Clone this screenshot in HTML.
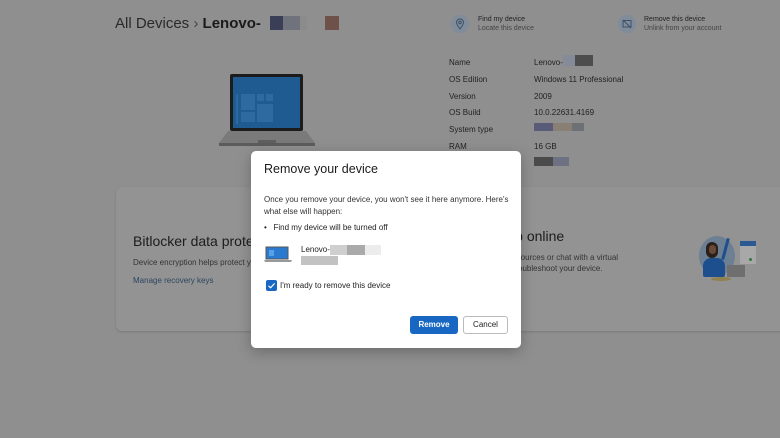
<!DOCTYPE html>
<html><head><meta charset="utf-8"><style>
*{margin:0;padding:0;box-sizing:border-box}
body{width:780px;height:438px;overflow:hidden;background:#8f8f8f;font-family:"Liberation Sans",sans-serif;position:relative;color:#1e1e1e}
.a{position:absolute}
.s{font-size:8px;color:#222;white-space:nowrap}
.t{font-size:8px;color:#333;white-space:nowrap}
</style></head><body>
<div class="a" style="left:115px;top:15px;font-size:15px;color:#2a2a2a;white-space:nowrap">All Devices <span style="color:#444">&#8250;</span> <span style="font-weight:bold;color:#1a1a1a">Lenovo-</span></div>
<div class="a" style="left:270px;top:16px;width:13px;height:14px;background:#3a3f57"></div>
<div class="a" style="left:283px;top:16px;width:17px;height:14px;background:#70737c"></div>
<div class="a" style="left:300px;top:16px;width:7px;height:14px;background:#8b8b8b"></div>
<div class="a" style="left:325px;top:16px;width:14px;height:14px;background:#6e5249"></div>

<div class="a" style="left:451px;top:15px;width:18px;height:18px;border-radius:50%;background:#7f8c9a"></div>
<svg class="a" style="left:455px;top:18px" width="10" height="12" viewBox="0 0 10 12"><path d="M5 11C2 7 1.5 5.5 1.5 4.5A3.5 3.5 0 0 1 8.5 4.5C8.5 5.5 8 7 5 11Z" fill="none" stroke="#3d4f66" stroke-width="1"/><circle cx="5" cy="4.5" r="1.2" fill="none" stroke="#3d4f66"/></svg>
<div class="a s" style="left:478px;top:16px;font-size:7px">Find my device</div>
<div class="a t" style="left:478px;top:25px;font-size:7px;color:#444">Locate this device</div>
<div class="a" style="left:618px;top:15px;width:18px;height:18px;border-radius:50%;background:#7f8c9a"></div>
<svg class="a" style="left:622px;top:19px" width="10" height="10" viewBox="0 0 10 10"><rect x="1" y="1.5" width="8" height="6.5" fill="none" stroke="#3d4f66"/><path d="M1 1L9 9" stroke="#3d4f66"/></svg>
<div class="a s" style="left:644px;top:16px;font-size:7px">Remove this device</div>
<div class="a t" style="left:644px;top:25px;font-size:7px;color:#444">Unlink from your account</div>

<!-- laptop -->
<div class="a" style="left:230px;top:74px;width:73px;height:57px;background:#1c1c1c;border-radius:2px"></div>
<div class="a" style="left:233px;top:77px;width:67px;height:51px;background:#1f5a90"></div>
<div class="a" style="left:236px;top:94px;width:2px;height:30px;background:#2e6aa0"></div>
<div class="a" style="left:241px;top:94px;width:14px;height:16px;background:#2e6aa0"></div>
<div class="a" style="left:241px;top:112px;width:14px;height:10px;background:#2e6aa0"></div>
<div class="a" style="left:257px;top:94px;width:7px;height:7px;background:#2e6aa0"></div>
<div class="a" style="left:266px;top:94px;width:7px;height:7px;background:#2e6aa0"></div>
<div class="a" style="left:257px;top:104px;width:16px;height:18px;background:#2e6aa0"></div>
<svg class="a" style="left:218px;top:131px" width="98" height="17"><path d="M10 0H88L97 12H1Z" fill="#7a7a7a"/><rect x="1" y="12" width="96" height="3" fill="#5c5c5c"/><rect x="40" y="9" width="18" height="3" fill="#5f5f5f"/></svg>

<div class="a" style="left:449px;top:55px;line-height:16.8px;font-size:8px;color:#222">Name<br>OS Edition<br>Version<br>OS Build<br>System type<br>RAM</div>
<div class="a" style="left:534px;top:55px;line-height:16.8px;font-size:8px;color:#222">Lenovo-<br>Windows 11 Professional<br>2009<br>10.0.22631.4169<br><br>16 GB</div>
<div class="a" style="left:563px;top:55px;width:12px;height:11px;background:#858b98"></div>
<div class="a" style="left:575px;top:55px;width:18px;height:11px;background:#4d4d4d"></div>
<div class="a" style="left:534px;top:123px;width:19px;height:8px;background:#595b78"></div>
<div class="a" style="left:553px;top:123px;width:19px;height:8px;background:#8a7f74"></div>
<div class="a" style="left:572px;top:123px;width:12px;height:8px;background:#6d7175"></div>
<div class="a" style="left:534px;top:157px;width:19px;height:9px;background:#4b4b4b"></div>
<div class="a" style="left:553px;top:157px;width:16px;height:9px;background:#6d7182"></div>

<!-- card -->
<div class="a" style="left:116px;top:187px;width:680px;height:144px;background:#939393;border-radius:6px;box-shadow:0 1px 2px rgba(0,0,0,.15)"></div>
<div class="a" style="left:133px;top:233px;font-size:14px;color:#1c1c1c;white-space:nowrap">Bitlocker data protection</div>
<div class="a t" style="left:133px;top:258px">Device encryption helps protect your data</div>
<div class="a t" style="left:133px;top:276px;color:#2c4660">Manage recovery keys</div>
<div class="a" style="left:470px;top:228px;font-size:14px;color:#1c1c1c;white-space:nowrap">Get help online</div>
<div class="a t" style="left:482px;top:253px">Search resources or chat with a virtual</div>
<div class="a t" style="left:482px;top:264px">agent to troubleshoot your device.</div>
<!-- illustration -->
<div class="a" style="left:699px;top:236px;width:36px;height:40px;border-radius:50%;background:#6d7f92"></div>
<div class="a" style="left:711px;top:277px;width:20px;height:4px;border-radius:50%;background:#8f8150"></div>
<div class="a" style="left:740px;top:244px;width:16px;height:20px;background:#a8a8a8"></div>
<div class="a" style="left:740px;top:241px;width:16px;height:5px;background:#2b5a92"></div>
<div class="a" style="left:749px;top:258px;width:3px;height:3px;border-radius:50%;background:#2f7b3b"></div>
<div class="a" style="left:706px;top:242px;width:12px;height:16px;border-radius:6px;background:#2a1f1a"></div>
<div class="a" style="left:709px;top:245px;width:7px;height:9px;border-radius:4px;background:#6a4a36"></div>
<div class="a" style="left:703px;top:258px;width:22px;height:19px;border-radius:8px 8px 2px 2px;background:#1d4f8e"></div>
<div class="a" style="left:724px;top:238px;width:3px;height:22px;background:#1d4f8e;transform:rotate(15deg)"></div>
<div class="a" style="left:727px;top:265px;width:18px;height:12px;background:#6f6f6f"></div>

<!-- dialog -->
<div class="a" style="left:251px;top:151px;width:270px;height:197px;background:#fff;border-radius:5px;box-shadow:0 4px 14px rgba(0,0,0,.25)"></div>
<div class="a" style="left:264px;top:162px;font-size:12.5px;color:#1b1b1b;white-space:nowrap">Remove your device</div>
<div class="a" style="left:264px;top:194px;font-size:8px;color:#333;line-height:11.5px;width:250px">Once you remove your device, you won't see it here anymore. Here's what else will happen:</div>
<div class="a" style="left:264px;top:223px;font-size:8px;color:#222;white-space:nowrap">&#8226;&nbsp;&nbsp;&nbsp;Find my device will be turned off</div>
<svg class="a" style="left:264px;top:246px" width="28" height="18"><rect x="2" y="1" width="22" height="12" fill="#2a7bd0" stroke="#555" stroke-width="1"/><rect x="5" y="4" width="5" height="6" fill="#5aa0e6"/><path d="M0 14H28L27 16H1Z" fill="#999"/></svg>
<div class="a" style="left:301px;top:245px;font-size:8px;color:#222">Lenovo-</div>
<div class="a" style="left:330px;top:245px;width:17px;height:10px;background:#cfcfcf"></div>
<div class="a" style="left:347px;top:245px;width:18px;height:10px;background:#aaa"></div>
<div class="a" style="left:365px;top:245px;width:16px;height:10px;background:#ececec"></div>
<div class="a" style="left:301px;top:256px;width:37px;height:9px;background:#c2c2c2"></div>
<div class="a" style="left:266px;top:280px;width:11px;height:11px;background:#1767c3;border-radius:2px"></div>
<svg class="a" style="left:266px;top:280px" width="11" height="11"><path d="M2.5 5.8L4.6 7.8L8.6 3.4" fill="none" stroke="#fff" stroke-width="1.2"/></svg>
<div class="a" style="left:280px;top:281px;font-size:8px;color:#222;white-space:nowrap">I'm ready to remove this device</div>
<div class="a" style="left:410px;top:316px;width:48px;height:18px;background:#1767c3;border-radius:3px;color:#fff;font-size:8px;text-align:center;line-height:18px;font-weight:bold">Remove</div>
<div class="a" style="left:463px;top:316px;width:45px;height:18px;background:#fff;border:1px solid #bbb;border-radius:3px;color:#222;font-size:8px;text-align:center;line-height:16px">Cancel</div>
</body></html>
